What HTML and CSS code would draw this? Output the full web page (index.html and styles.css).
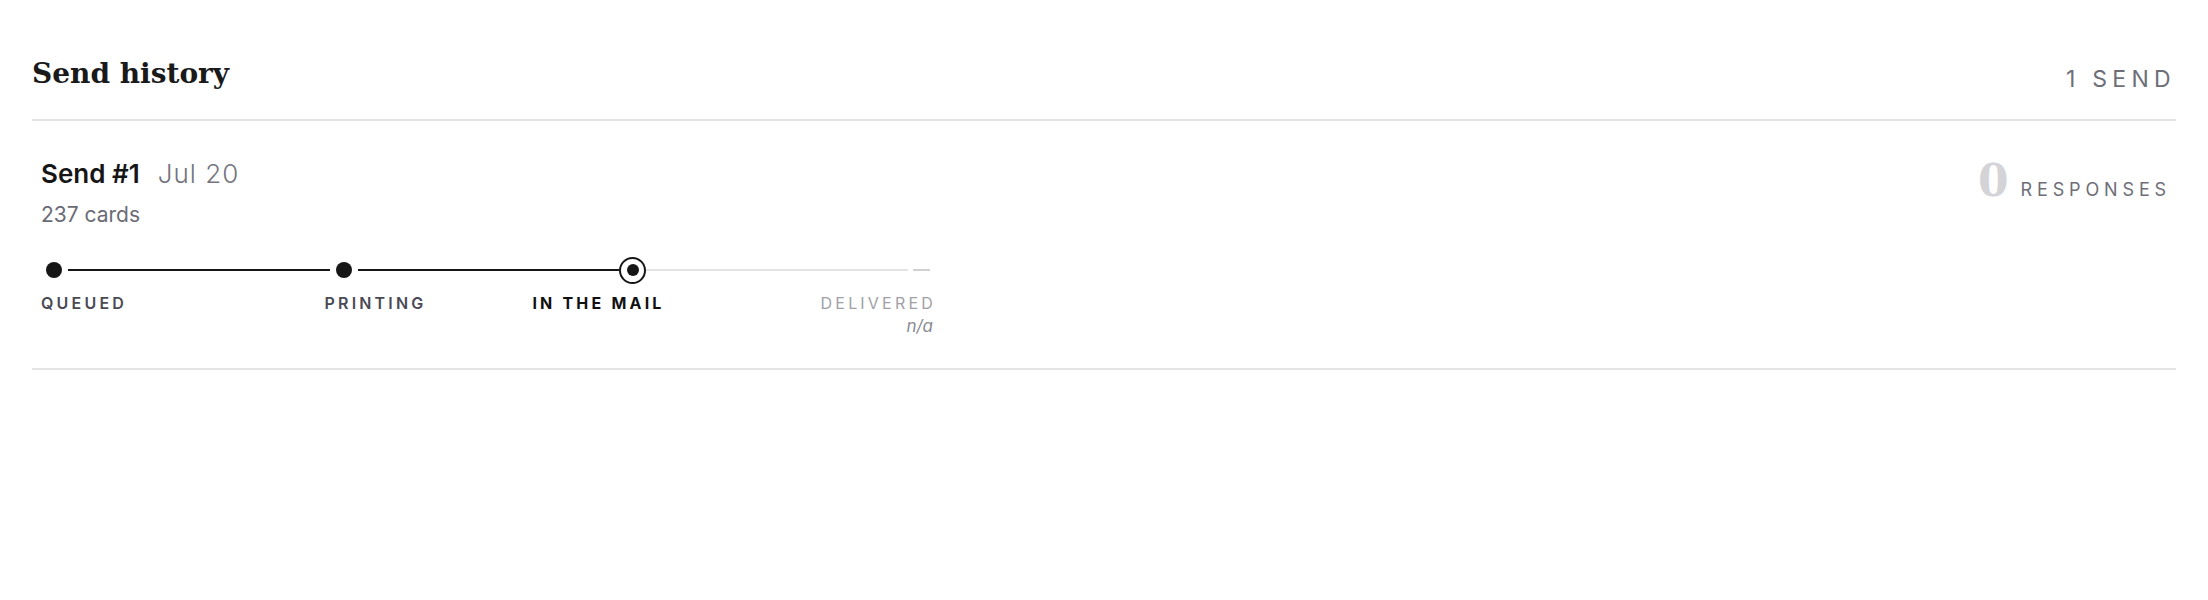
FILE: index.html
```html
<!DOCTYPE html>
<html lang="en">
<head>
  <meta charset="UTF-8" />
  <meta name="viewport" content="width=device-width, initial-scale=1.0" />
  <title>Send history</title>
  <link rel="stylesheet" href="styles.css">
</head>
<body>
  <main class="history">
    <header class="history-head">
      <h2 class="history-title">Send history</h2>
      <span class="history-count">1 send</span>
    </header>

    <section class="send">
      <div class="send-info">
        <div class="send-heading">
          <span class="send-name">Send #1</span>
          <span class="send-date">Jul 20</span>
        </div>
        <div class="send-cards">237 cards</div>

        <div class="progress">
          <div class="track">
            <span class="dot"></span>
            <span class="line done"></span>
            <span class="dot"></span>
            <span class="line done to-current"></span>
            <span class="ring"><span class="ring-core"></span></span>
            <span class="line todo"></span>
            <span class="pending"></span>
          </div>
          <div class="steps">
            <div class="step done">Queued</div>
            <div class="step done">Printing</div>
            <div class="step current">In the mail</div>
            <div class="step todo">
              Delivered
              <div class="step-date">n/a</div>
            </div>
          </div>
        </div>
      </div>

      <div class="send-responses">
        <span class="responses-num">0</span>
        <span class="responses-label">Responses</span>
      </div>
    </section>
  </main>
</body>
</html>
```

FILE: styles.css
```css
body {
  margin: 0;
  font-family: Inter, "Liberation Sans", Arial, sans-serif;
  background-color: #fff;
  color: #1a1a1a;
}

.history {
  padding: 0 32px;
}

/* header: title on the left, send count on the right */
.history-head {
  display: flex;
  justify-content: space-between;
  align-items: flex-end;
  padding-top: 57px;
  padding-bottom: 28px;
  border-bottom: 2px solid #e4e4e4;
}

.history-title {
  margin: 0;
  font-family: "DejaVu Serif", "Liberation Serif", serif;
  font-size: 28px;
  font-weight: bold;
  line-height: 34px;
  color: #1a1a1a;
}

.history-count {
  font-size: 23px;
  line-height: 24px;
  letter-spacing: 0.23em;
  text-transform: uppercase;
  color: #6e6e78;
}

/* one send row */
.send {
  display: flex;
  justify-content: space-between;
  align-items: flex-start;
  padding: 38px 10px 31px 9px;
  border-bottom: 2px solid #e4e4e4;
}

.send-heading {
  display: flex;
  align-items: baseline;
  gap: 18px;
  line-height: 30px;
}

.send-name {
  font-size: 26px;
  font-weight: 600;
  color: #161616;
}

.send-date {
  font-size: 26px;
  font-weight: 300;
  letter-spacing: 0.04em;
  color: #74747e;
}

.send-cards {
  margin-top: 13px;
  font-size: 21px;
  line-height: 26px;
  color: #6b6b75;
}

/* status timeline */
.progress {
  width: 892px;
  margin-top: 28px;
}

.track {
  display: flex;
  align-items: center;
  height: 28px;
  padding: 0 3px 0 5px;
}

.dot {
  width: 16px;
  height: 16px;
  border-radius: 50%;
  background-color: #161616;
  flex: none;
}

.line {
  flex: 1;
  height: 2px;
  margin: 0 6px;
}

.line.done {
  background-color: #161616;
}

.line.to-current {
  margin-right: 0;
}

.line.todo {
  margin: 0 5px 0 0;
  background-color: #e4e4e4;
}

.ring {
  width: 27px;
  height: 27px;
  box-sizing: border-box;
  border: 2px solid #161616;
  border-radius: 50%;
  display: flex;
  align-items: center;
  justify-content: center;
  flex: none;
}

.ring-core {
  width: 12px;
  height: 12px;
  border-radius: 50%;
  background-color: #161616;
}

.pending {
  width: 17px;
  height: 2px;
  background-color: #cfcfd4;
  flex: none;
}

.steps {
  display: grid;
  grid-template-columns: repeat(4, 1fr);
  margin-top: 9px;
}

.step {
  font-size: 16px;
  font-weight: 600;
  letter-spacing: 0.2em;
  line-height: 20px;
  text-transform: uppercase;
  text-align: center;
}

.step:first-child {
  text-align: left;
}

.step:last-child {
  text-align: right;
  margin-right: -3px;
}

.step.done {
  color: #4a4a55;
}

.step.current {
  font-weight: 700;
  color: #111;
}

.step.todo {
  font-weight: 400;
  color: #a0a0a6;
}

.step-date {
  margin-top: 2px;
  margin-right: 3px;
  font-size: 17px;
  font-style: italic;
  letter-spacing: 0;
  text-transform: none;
  line-height: 22px;
  color: #8a8a90;
}

/* response counter on the right */
.send-responses {
  display: flex;
  align-items: baseline;
  gap: 12px;
}

.responses-num {
  font-family: "DejaVu Serif", "Liberation Serif", serif;
  font-size: 44px;
  font-weight: bold;
  line-height: 1;
  color: #d4d4d8;
}

.responses-label {
  font-size: 18px;
  letter-spacing: 0.27em;
  margin-right: -5px;
  text-transform: uppercase;
  color: #6e6e78;
}
```
